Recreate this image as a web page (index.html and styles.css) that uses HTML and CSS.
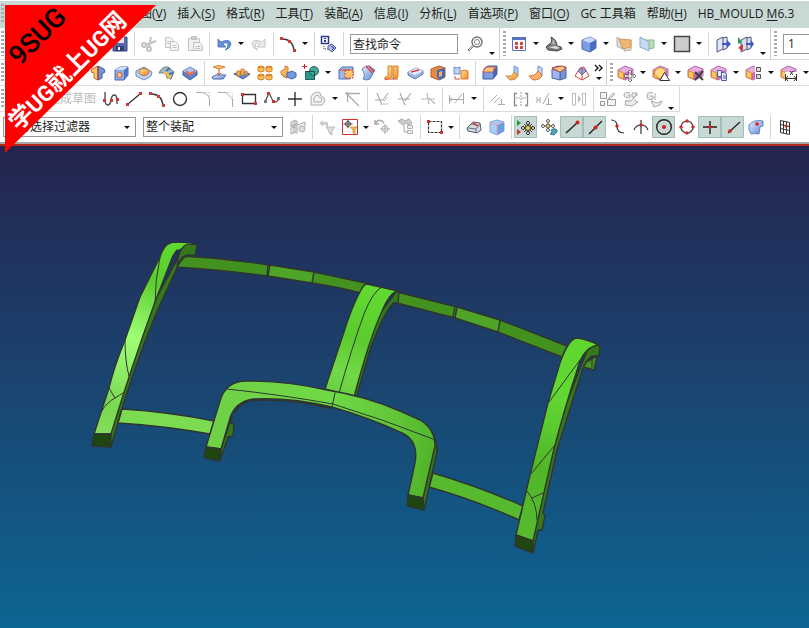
FILE: index.html
```html
<!DOCTYPE html>
<html lang="zh-CN">
<head>
<meta charset="utf-8">
<meta name="viewport" content="width=device-width">
<title>NX</title>
<link rel="stylesheet" href="styles.css">
</head>
<body>
<svg class="defs" aria-hidden="true">
<defs>
<linearGradient id="gBlue" x1="0" y1="0" x2="1" y2="1"><stop offset="0" stop-color="#e8f1ff"/><stop offset="1" stop-color="#5d86d2"/></linearGradient>
<linearGradient id="gOr" x1="0" y1="0" x2="1" y2="1"><stop offset="0" stop-color="#ffe39a"/><stop offset="1" stop-color="#ee8a2c"/></linearGradient>
<linearGradient id="pillarL" gradientUnits="userSpaceOnUse" x1="180" y1="243" x2="100" y2="434"><stop offset="0" stop-color="#60da30"/><stop offset=".22" stop-color="#5ccc2e"/><stop offset=".5" stop-color="#9dff74"/><stop offset=".68" stop-color="#8fec68"/><stop offset=".85" stop-color="#78d84e"/><stop offset="1" stop-color="#84de5c"/></linearGradient>
<linearGradient id="pillarC" gradientUnits="userSpaceOnUse" x1="380" y1="285" x2="340" y2="395"><stop offset="0" stop-color="#62dc30"/><stop offset=".5" stop-color="#5ccb2e"/><stop offset=".8" stop-color="#72d948"/><stop offset="1" stop-color="#68d03e"/></linearGradient>
<linearGradient id="pillarR" gradientUnits="userSpaceOnUse" x1="580" y1="338" x2="525" y2="540"><stop offset="0" stop-color="#5fd82e"/><stop offset=".3" stop-color="#62d733"/><stop offset=".65" stop-color="#50b628"/><stop offset="1" stop-color="#57ba2f"/></linearGradient>
<linearGradient id="arch" gradientUnits="userSpaceOnUse" x1="210" y1="400" x2="435" y2="450"><stop offset="0" stop-color="#70d047"/><stop offset=".5" stop-color="#70d945"/><stop offset=".8" stop-color="#61c638"/><stop offset="1" stop-color="#52b32b"/></linearGradient>
</defs>

<symbol id="cube" viewBox="0 0 20 20"><path d="M3 6l8-3 6 3v8l-6 4-8-3z" fill="#7d9fe4" stroke="#4866ae"/><path d="M3 6l8-3 6 3-6 3z" fill="#c4d8fa"/><path d="M11 9l6-3v8l-6 4z" fill="#4a6cc0"/></symbol>
<symbol id="pink" viewBox="0 0 20 20"><path d="M2 7l7-4 8 3v7l-8 4-7-3z" fill="#e5aede" stroke="#b565ac"/><path d="M2.500 7.500l5 2.500v6l-5-2z" fill="#ffc95e" stroke="#df8a30"/><path d="M8 10l8-3v6l-8 4z" fill="#cc68b4"/></symbol>
<symbol id="save" viewBox="0 0 20 20"><path d="M3 3h14v14H3z" fill="#5669a8" stroke="#37488a"/><path d="M6 3h8v6H6z" fill="#dce4f5"/><path d="M6 12h8v5H6z" fill="#303d70"/><path d="M8 13h2v3H8z" fill="#fff"/></symbol>
<symbol id="cut" viewBox="0 0 20 20"><g fill="none" stroke="#c3c3c3" stroke-width="2"><circle cx="5" cy="11" r="2"/><circle cx="10" cy="15" r="2"/><path d="M7 11l10-4M10 13L12 3"/></g></symbol>
<symbol id="copy" viewBox="0 0 20 20"><g fill="#f5f5f5" stroke="#c3c3c3"><path d="M3.500 3.500h5l3 3v7h-8z"/><path d="M8.500 7.500h5l3 3v6h-8zM10.500 11.500h4M10.500 13.500h4M5 7.500h3M5 9.500h3"/></g></symbol>
<symbol id="paste" viewBox="0 0 20 20"><g fill="#f2f2f2" stroke="#c0c0c0"><path d="M3.500 4.500h11v12h-11z"/><path d="M6.500 2.500h5v3h-5z" fill="#ccc"/><path d="M8.500 8.500h6l3 3v5h-9zM10.500 12.500h5M10.500 14.500h5"/></g></symbol>
<symbol id="undo" viewBox="0 0 20 20"><path d="M4 5v8h8L9 10q4-3 5 1 0 3-3 5 5-1 6-6-1-6-10-2z" fill="#6591d8" stroke="#3e6db9" stroke-width=".8"/></symbol>
<symbol id="redo" viewBox="0 0 20 20"><path d="M16 5v8H8l3-3Q7 7 6 11q0 3 3 5-5-1-6-6 1-6 10-2z" fill="#ececec" stroke="#c5c5c5"/></symbol>
<symbol id="arc" viewBox="0 0 20 20"><path d="M4 5q11 0 12 12" fill="none" stroke="#333" stroke-width="1.500"/><path d="M2 3h3v3H2zM10 6h3v3h-3zM15 15h3v3h-3z" fill="#d03a3a"/></symbol>
<symbol id="info" viewBox="0 0 20 20"><path d="M2.500 2.500h7v7h-7z" fill="#fff" stroke="#2c3587" stroke-width="1.500"/><path d="M5 4h2v1H5zM5 6h2v2H5z" fill="#2c3587"/><path d="M5 12v3h4" fill="none" stroke="#444" stroke-dasharray="1 1"/><path d="M9 12l4-2 4 4-4 4-4-3z" fill="#b4bbea" stroke="#5058a8"/><path d="M12 12l3 2-2 2" fill="none" stroke="#2c3587"/></symbol>
<symbol id="find" viewBox="0 0 20 20"><circle cx="12" cy="8" r="5" fill="#fff" stroke="#777" stroke-width="1.500"/><circle cx="12" cy="8" r="2.500" fill="none" stroke="#888"/><path d="M8 11l-5 5 1 1 5-5" fill="#eee" stroke="#777"/></symbol>
<symbol id="win" viewBox="0 0 20 20"><path d="M3.500 3.500h13v13h-13z" fill="#f6f8ff" stroke="#5c74b8"/><path d="M3 3h14v3H3z" fill="#5873c0"/><path d="M6 8h3v3H6zM11 8h3v3h-3zM6 12h3v3H6zM11 12h3v3h-3z" fill="#d5483e"/></symbol>
<symbol id="hat" viewBox="0 0 20 20"><path d="M4 11q5-2 3-8 6 3 6 9l4 1 1 2-5 2-9-1-2-3z" fill="#777" stroke="#484848"/><path d="M4 13l8-1 4 2-4 1z" fill="#ddd"/><path d="M9 5q3 3 2 6l-4-1z" fill="#aaa"/></symbol>
<symbol id="sheetO" viewBox="0 0 20 20"><path d="M3 3v9l5 3V6zM10 8l7-2v10l-7 1z" fill="#ddd" stroke="#b0b0b0"/><path d="M5 5l12 1v7l-8 2z" fill="#efb671" stroke="#d99655"/></symbol>
<symbol id="sheetB" viewBox="0 0 20 20"><path d="M8 6h9v8l-6 1z" fill="#b7ddb8" stroke="#84ba89"/><path d="M3 3v10l9 4V8z" fill="#c7dbf0" stroke="#8aa8c8"/></symbol>
<symbol id="square" viewBox="0 0 20 20"><path d="M2.500 2.500h15v15h-15z" fill="#ccc" stroke="#444" stroke-width="1.500"/></symbol>
<symbol id="exit" viewBox="0 0 20 20"><path d="M4 6l6-3v12l-6 3zM10 4l4-1v11l-4 2" fill="#e0e6f5" stroke="#4a557e"/><path d="M9 9h5V6l4 4-4 4v-3H9z" fill="#3d54c4"/></symbol>
<symbol id="exit2" viewBox="0 0 20 20"><path d="M5 6l6-3v12l-6 3zM11 4l4-1v11l-4 2" fill="#d8dff2" stroke="#4a557e"/><path d="M10 9h5V6l3 4-3 4v-3h-5z" fill="#3d54c4"/><path d="M2 3l4 5-4 2z" fill="#2b9d50"/><path d="M7 10l-5 4 5 3z" fill="#cf3d35"/></symbol>

<symbol id="m1" viewBox="0 0 20 20"><path d="M4 6l6-3v14l-4-2v-5l-3-1z" fill="#ffc560" stroke="#c26d2b"/><path d="M10 3l6 3 1 3-3 2v4l-4 2z" fill="#7593ce" stroke="#455d99"/><path d="M10 3v14" stroke="#b33f36"/></symbol>
<symbol id="m2" viewBox="0 0 20 20"><path d="M4 7l5-3h8v8l-4 5H4z" fill="#8ea9e6" stroke="#4a66b2"/><path d="M4 7l5-3h8l-4 3z" fill="#d3e0fb"/><path d="M13 7l4-3v8l-4 5z" fill="#5673c4"/><circle cx="8.500" cy="12" r="2.500" fill="#ffd890" stroke="#d55234"/></symbol>
<symbol id="m3" viewBox="0 0 20 20"><path d="M2 8l8-4 8 5-1 4-7 4-8-4z" fill="#bcd5f5" stroke="#6390ca"/><ellipse cx="10" cy="9" rx="5" ry="3.500" fill="url(#gOr)" stroke="#cc6a26"/></symbol>
<symbol id="m4" viewBox="0 0 20 20"><path d="M2 10q3-7 9-6l6 5-3 7-4-1q0-6-8-5z" fill="#a9b7bd" stroke="#667b85"/><path d="M6 11q5 0 5 5l3-1q0-6-6-6z" fill="#f2bf50"/><path d="M9 8l4-3M12 11l4-1" stroke="#3d76b5" stroke-width="2"/></symbol>
<symbol id="m5" viewBox="0 0 20 20"><path d="M3 8l7-4 7 4v4l-7 5-7-5z" fill="#5d7fcb" stroke="#3c5da8"/><path d="M3 8l7-4 7 4-7 4z" fill="#a8c2f4"/><path d="M6 7l4 3 5-3v2l-5 4-4-3z" fill="#f06d3b"/></symbol>
<symbol id="m6" viewBox="0 0 20 20"><path d="M3 14l4-2h10l-3 4H4z" fill="url(#gBlue)" stroke="#4b69af"/><path d="M4 4q6-3 12 0l-6 2z" fill="#ffc873" stroke="#d67f31"/><path d="M10 6v6M8 10l2 2 2-2" fill="none" stroke="#c94b31"/></symbol>
<symbol id="m7" viewBox="0 0 20 20"><path d="M2 11l8-3 8 3-7 5z" fill="#6489ce" stroke="#3d5ea4"/><path d="M5 8h3v5H5zM9 6h3v6H9zM13 8h2v4h-2z" fill="#f6b552" stroke="#c97928" stroke-width=".8"/></symbol>
<symbol id="m8" viewBox="0 0 20 20"><g fill="#ffbe58" stroke="#d28125"><path d="M3 4l3-1 3 1v4l-3 1-3-1zM11 4l3-1 3 1v4l-3 1-3-1zM3 12l3-1 3 1v4l-3 1-3-1zM11 12l3-1 3 1v4l-3 1-3-1z"/><path d="M3 4l3 1 3-1M11 4l3 1 3-1M3 12l3 1 3-1M11 12l3 1 3-1"/></g></symbol>
<symbol id="m9" viewBox="0 0 20 20"><path d="M3 8l4-2V3l3 1v4l-1 7-3-1-3-3z" fill="url(#gOr)" stroke="#d17a32"/><path d="M9 10l5-2 4 2v4l-4 2-5-2z" fill="#7599dc" stroke="#4668b0"/></symbol>
<symbol id="m10" viewBox="0 0 20 20"><path d="M4.500 8.500h9v8h-9z" fill="#2b9a8b" stroke="#246459"/><circle cx="13" cy="8" r="4.500" fill="#41a79a" stroke="#285f55"/><path d="M4.500 8.500h9v8" fill="none" stroke="#1d4f47"/><path d="M1 3.500h5M3.500 1v5" stroke="#d02828"/></symbol>
<symbol id="m11" viewBox="0 0 20 20"><path d="M3 7l3-3h11v9l-3 3H3z" fill="#9db9ec" stroke="#506eb4"/><path d="M9 7h8v8H9z" fill="#ffc768" stroke="#d34632" stroke-dasharray="2 1"/><path d="M3 7h11" stroke="#d34632"/></symbol>
<symbol id="m12" viewBox="0 0 20 20"><path d="M3 6q4-4 7-3l6 4-5 9q-4 2-7 0 3-4-1-10z" fill="url(#gBlue)" stroke="#6880b8"/><path d="M7 3l6 7M10 3l5 6" stroke="#d44040" stroke-width="1.200"/></symbol>
<symbol id="m13" viewBox="0 0 20 20"><path d="M6 3h4v11l-7 3v-3l3-1zM11 3h5v11l-5 2z" fill="url(#gOr)" stroke="#d5842f"/><path d="M3 16h13" stroke="#d24b2d"/></symbol>
<symbol id="m14" viewBox="0 0 20 20"><path d="M3 9l8-4 7 3v3l-8 5-7-4z" fill="#9bb4e9" stroke="#5876bb"/><path d="M3 9l8-4 7 3-8 4z" fill="#e8efff"/><path d="M6 9l8-2" stroke="#d93f36" stroke-width="1.500"/></symbol>
<symbol id="m15" viewBox="0 0 20 20"><path d="M3 6l8-3 6 2v9l-6 3-8-3z" fill="#e78a40" stroke="#b65a2a"/><path d="M9 7l8-2v9l-5 3-3-3z" fill="#4868b4"/><path d="M11 9l3-1v5l-3 1z" fill="#f6b165"/></symbol>
<symbol id="m16" viewBox="0 0 20 20"><path d="M3 4q3 2 6 0v7H3z" fill="#bed3f6" stroke="#6c8dc8"/><path d="M10 8q3-2 7 0v8h-7z" fill="url(#gOr)" stroke="#d77e31"/><path d="M4 13v3h5" fill="none" stroke="#d34635"/></symbol>
<symbol id="m17" viewBox="0 0 20 20"><path d="M3 9q1-5 5-6h9v8l-4 5H3z" fill="#7f9cdf" stroke="#3f5ca5"/><path d="M13 9l4-6v8l-4 5z" fill="#4563b4"/><path d="M3 9q1-4 4-5h9q-3 1-3 5z" fill="#ffc880" stroke="#cf4733" stroke-width=".8"/></symbol>
<symbol id="m18" viewBox="0 0 20 20"><path d="M11 3l4 2v7l-4 3z" fill="#b1caf2" stroke="#7192cc"/><path d="M3 13q7 1 8-4l4 3q-1 5-8 5z" fill="url(#gOr)" stroke="#d28738"/></symbol>
<symbol id="m19" viewBox="0 0 20 20"><path d="M12 3l4 2v8l-4 3z" fill="#c6d7ef" stroke="#7192cc"/><path d="M3 13q7 0 9-5l4 4q-1 5-9 5z" fill="#ffb669" stroke="#d56b34"/></symbol>
<symbol id="m21" viewBox="0 0 20 20"><path d="M3 5l6-2 8 1v11l-6 2V8z" fill="#7593d6" stroke="#4d65a8"/><path d="M3 6v9l8 2V9z" fill="#9db8ee" stroke="#4d65a8"/><path d="M3 5l10-2 4 2-6 4z" fill="#ffcb82" stroke="#d34632"/></symbol>
<symbol id="m22" viewBox="0 0 20 20"><path d="M3 13l5-8 4-1 5 9-7 4z" fill="#fff" stroke="#d44038"/><path d="M6 8q4-5 8 0l-4 4z" fill="#8fb1e8" stroke="#4d71ba"/><path d="M10 6v11" stroke="#d44038" fill="none"/></symbol>
<symbol id="p1" viewBox="0 0 20 20"><use href="#pink"/><path d="M14 7l2 2h-1v3h3v-1l2 2-2 2v-1h-3v3h1l-2 2-2-2h1v-3h-3v1l-2-2 2-2v1h3V9h-1z" fill="#fff" stroke="#444" stroke-width=".7"/></symbol>
<symbol id="p2" viewBox="0 0 20 20"><use href="#pink"/><path d="M3 11q2-8 9-6l3 4-6 7z" fill="#ffda80" stroke="#d08233"/><path d="M9 17.500l4.500-8 5 8z" fill="#fff" stroke="#333"/></symbol>
<symbol id="p3" viewBox="0 0 20 20"><use href="#pink"/><path d="M9 9l8 8M17 8l-8 9" stroke="#444" stroke-width="2"/></symbol>
<symbol id="p4" viewBox="0 0 20 20"><use href="#pink"/><path d="M8.500 7.500h4v6h-4zM12.500 9.500h3l2 2v6h-5z" fill="#e6eafc" stroke="#4d5db0"/><path d="M14 13h3M14 15h3" stroke="#4d5db0"/></symbol>
<symbol id="p5" viewBox="0 0 20 20"><use href="#pink"/><path d="M11 2h9v16h-9z" fill="#fff"/><path d="M12.500 4.500h4v4h-4zM12.500 11.500h4v4h-4z" fill="#ddd" stroke="#555"/></symbol>
<symbol id="p6" viewBox="0 0 20 20"><use href="#pink"/><path d="M6 9h14v10H6z" fill="#fff"/><path d="M6.500 11v7M17.500 11v7M7 15.500h10M9 13l-2 2.500L9 18M15 13l2 2.500L15 18M11 8l3 4M14 8l-3 4" fill="none" stroke="#333"/></symbol>

<symbol id="s1" viewBox="0 0 20 20"><path d="M4 3v8q0 5 3 5 2 0 3-5 1-5 3-5 3 0 3 5v4" fill="none" stroke="#444" stroke-width="1.300"/><path d="M2 10h3v3H2zM9 10h3v3H9zM15 9h3v3h-3z" fill="#d13434"/></symbol>
<symbol id="s2" viewBox="0 0 20 20"><path d="M4 15L16 5" stroke="#333" stroke-width="1.300"/><path d="M2 14h3v3H2zM15 3h3v3h-3z" fill="#d13434"/></symbol>
<symbol id="s4" viewBox="0 0 20 20"><circle cx="10" cy="10" r="6.500" fill="none" stroke="#333" stroke-width="1.400"/></symbol>
<symbol id="s5" viewBox="0 0 20 20"><path d="M3 3.500h6q7 1 7.500 7V17" fill="none" stroke="#aaa"/><path d="M11 3.500h5.500V9" fill="none" stroke="#ccc" stroke-dasharray="1 1"/></symbol>
<symbol id="s6" viewBox="0 0 20 20"><path d="M2 3.500h8l6.500 6.500v8" fill="none" stroke="#aaa"/><path d="M10 3.500h6.500V10" fill="none" stroke="#ccc" stroke-dasharray="1 1"/></symbol>
<symbol id="s7" viewBox="0 0 20 20"><path d="M3.500 5.500h13v9h-13z" fill="none" stroke="#333" stroke-width="1.300"/><path d="M2 4h3v3H2zM15 13h3v3h-3z" fill="#d13434"/></symbol>
<symbol id="s8" viewBox="0 0 20 20"><path d="M3 13l4-9 4 8q4 3 6-3" fill="none" stroke="#555" stroke-width="1.300"/><path d="M5 3h3v3H5zM10 11h3v3h-3z" fill="#d13434"/><path d="M2 11h3v3H2zM15 8h3v3h-3z" fill="#777"/></symbol>
<symbol id="s9" viewBox="0 0 20 20"><path d="M3 10h14M10 3v14" stroke="#333" stroke-width="1.400"/></symbol>
<symbol id="s10" viewBox="0 0 20 20"><path d="M3 16V8q1-4 6-5 4 0 4 4 4 1 4 5l-3 4z" fill="#f4f4f4" stroke="#aaa"/><path d="M6 13V9q1-3 4-3 1 3 4 4l-1 3z" fill="none" stroke="#aaa"/></symbol>
<symbol id="s11" viewBox="0 0 20 20"><path d="M2 4.500h15M4.500 3v10M4 5l12 12" fill="none" stroke="#aaa" stroke-width="1.300"/></symbol>
<symbol id="s12" viewBox="0 0 20 20"><path d="M3 11h8L16 4M5 4l5 12" stroke="#aaa" fill="none" stroke-width="1.200"/><path d="M12 12l4-4M11 15h6" stroke="#aaa" stroke-dasharray="2 1"/></symbol>
<symbol id="s13" viewBox="0 0 20 20"><path d="M3 10h12M5 4l5 12M10 12l6-8" stroke="#aaa" fill="none" stroke-width="1.200"/></symbol>
<symbol id="s14" viewBox="0 0 20 20"><path d="M3 10h14M9 4l2 11M11 9l6 6" stroke="#bbb" fill="none" stroke-width="1.200"/></symbol>
<symbol id="s15" viewBox="0 0 20 20"><path d="M2.500 6v9M16.500 4v11M3 10.500h13M5 8l-2 2.500L5 13M8 14l7-9" stroke="#aaa" fill="none"/></symbol>
<symbol id="s16" viewBox="0 0 20 20"><path d="M3 12l6-6M6 14l6-6M10 15.500h7M13.500 10v5" stroke="#aaa" fill="none"/></symbol>
<symbol id="s17" viewBox="0 0 20 20"><path d="M6 4.500H3.500v12H6M14 4.500h2.500v12H14" fill="none" stroke="#888" stroke-width="1.300"/><path d="M10 3v14M5 9h4M11 9h4" stroke="#999" stroke-dasharray="2 1"/></symbol>
<symbol id="s18" viewBox="0 0 20 20"><path d="M3 8v6M6 8v6M3 11h3M9 15l6-11M12 15.500h6M14.500 9v6" stroke="#aaa" fill="none"/></symbol>
<symbol id="s19" viewBox="0 0 20 20"><path d="M3.500 4v12M6.500 4v12M13.500 4v12M16.500 4v12M3 4.500h4M3 16h4M13 4.500h4M13 16h4" stroke="#bbb"/><path d="M9 6l3 4-3 4z" fill="#bbb"/></symbol>
<symbol id="s20" viewBox="0 0 20 20"><path d="M2.500 3.500h6v6h-6zM9.500 10.500h8v6h-8zM2.500 12.500h4v4h-4z" fill="#f3f3f3" stroke="#999"/><path d="M10 10l5-6 2 1-5 5z" fill="#eee" stroke="#aaa"/></symbol>
<symbol id="s21" viewBox="0 0 20 20"><path d="M9 4Q3 2 3 6t6 2V6H7M11 4h5l-2 4h-3zM4 12h6l7-7M5 11l-1 5 7 1 6-4-4-2" fill="#ececec" stroke="#aaa"/></symbol>
<symbol id="s22" viewBox="0 0 20 20"><path d="M9 4Q3 2 3 7t6 3V7H6M11 4v7M7 12l6 2 5-2-2 4-6 2z" fill="#ececec" stroke="#aaa"/></symbol>

<symbol id="f1" viewBox="0 0 20 20"><path d="M3 5l5-2v5l-5 2zM3 11l5-1v5l-5 2zM9 4v13M9 8l8-3v4l-6 3M3 8h6M6 4v12" fill="#eee" stroke="#aaa"/><circle cx="14" cy="12" r="3" fill="#ddd" stroke="#b2b2b2"/></symbol>
<symbol id="f2" viewBox="0 0 20 20"><path d="M2 6l4-3v2h5v5H9V8H6v2z" fill="#ccc"/><path d="M9 10h9l-3 4v4l-3-2v-2z" fill="#ddd" stroke="#bbb"/></symbol>
<symbol id="f3" viewBox="0 0 20 20"><path d="M2.500 2.500h15v15h-15z" fill="#fff" stroke="#cf3131"/><circle cx="8" cy="7" r="2.500" fill="none" stroke="#444"/><path d="M3.500 7h9M8 3v8" stroke="#444"/><path d="M10 10h7l-2 3v4l-2-1v-3z" fill="#f4b63b" stroke="#ce8629" stroke-width=".6"/></symbol>
<symbol id="f4" viewBox="0 0 20 20"><path d="M2 7q4-7 9-1M2 3v4h4" fill="none" stroke="#aaa" stroke-width="1.500"/><circle cx="12" cy="12" r="3" fill="none" stroke="#aaa"/><path d="M7 12h10M12 7v10" stroke="#aaa"/></symbol>
<symbol id="f5" viewBox="0 0 20 20"><path d="M2 4l4-2 3 2 4-2 3 4-3 2-3-2-3 2z" fill="#ccc" stroke="#aaa"/><path d="M11.500 8.500h5v3h-5zM11.500 13.500h5v3h-5zM8 8v7h3" fill="#eee" stroke="#b4b4b4"/></symbol>
<symbol id="f6" viewBox="0 0 20 20"><path d="M3.500 4.500h13v11h-13z" fill="none" stroke="#333" stroke-width="1.200" stroke-dasharray="3 1"/><path d="M2 3h3v3H2zM15 14h3v3h-3z" fill="#d13434"/></symbol>
<symbol id="f7" viewBox="0 0 20 20"><path d="M3 11l6-6 7 1 1 7-4 3-9-2z" fill="#d5dbe5" stroke="#505a69"/><path d="M4 11l8 1 4-5M12 12v4M7 7l6 1" fill="none" stroke="#69717f"/><path d="M9 6l5 3" stroke="#dc3838" stroke-width="1.500"/></symbol>
<symbol id="f8" viewBox="0 0 20 20"><path d="M3 5l7-2 7 2v9l-7 4-7-3z" fill="#a9cdf3" stroke="#7daade"/><path d="M10 8l7-3v9l-7 4z" fill="#6e9bdd"/><path d="M3 5l7 3 7-3M10 8v9" fill="none" stroke="#e6a0b0"/></symbol>
<symbol id="f9" viewBox="0 0 20 20"><path d="M1 3l4 3-4 3z" fill="#209a37"/><path d="M1 12l4 3-4 3z" fill="#c93030"/><path d="M6 11h12M12 5v12M8 7l8 8M16 7l-8 8" stroke="#333"/><g fill="#fff" stroke="#222"><circle cx="12" cy="6" r="1.500"/><circle cx="12" cy="16" r="1.500"/><circle cx="7" cy="11" r="1.500"/><circle cx="17" cy="11" r="1.500"/></g><circle cx="12" cy="11" r="2.500" fill="#f3da2a" stroke="#333"/></symbol>
<symbol id="f10" viewBox="0 0 20 20"><g fill="#fff" stroke="#555"><path d="M4 9h11M9 3v11"/><circle cx="9" cy="4" r="1.500"/><circle cx="9" cy="13" r="1.500"/><circle cx="4" cy="9" r="1.500"/><circle cx="14" cy="9" r="1.500"/></g><circle cx="9" cy="9" r="2" fill="#f0d43b" stroke="#555"/><path d="M12 13q3-3 6 0v2l-3 3-4-1 2-2z" fill="#4fa7b3" stroke="#347f8a"/></symbol>
<symbol id="f11" viewBox="0 0 20 20"><path d="M4 16L15 6" stroke="#222" stroke-width="1.400"/><circle cx="15.500" cy="5.500" r="2" fill="#d21f1f"/></symbol>
<symbol id="f12" viewBox="0 0 20 20"><path d="M4 17L17 4" stroke="#222" stroke-width="1.400"/><circle cx="10.500" cy="10.500" r="2" fill="#d21f1f"/></symbol>
<symbol id="f13" viewBox="0 0 20 20"><path d="M3 3q6 0 6 6 0 7 7 7" fill="none" stroke="#333" stroke-width="1.200"/><circle cx="9" cy="9" r="1.700" fill="#d21f1f"/></symbol>
<symbol id="f14" viewBox="0 0 20 20"><path d="M3 13q2-5 7-5t7 5M10 3v14" fill="none" stroke="#333" stroke-width="1.200"/><circle cx="10" cy="8" r="1.700" fill="#d21f1f"/></symbol>
<symbol id="f15" viewBox="0 0 20 20"><circle cx="10" cy="10" r="7.300" fill="none" stroke="#222" stroke-width="1.400"/><circle cx="10" cy="10" r="2" fill="#d21f1f"/></symbol>
<symbol id="f16" viewBox="0 0 20 20"><circle cx="10" cy="10" r="6" fill="none" stroke="#444" stroke-width="1.200"/><g fill="#d62b2b"><circle cx="10" cy="4" r="1.800"/><circle cx="10" cy="16" r="1.800"/><circle cx="4" cy="10" r="1.800"/><circle cx="16" cy="10" r="1.800"/></g></symbol>
<symbol id="f17" viewBox="0 0 20 20"><path d="M3 10h14M10 4v13" stroke="#222" stroke-width="1.400"/><circle cx="10" cy="10" r="1.800" fill="#d21f1f"/></symbol>
<symbol id="f18" viewBox="0 0 20 20"><path d="M5 16L17 5" stroke="#222" stroke-width="1.300"/><circle cx="7" cy="14" r="1.800" fill="#d21f1f"/></symbol>
<symbol id="f19" viewBox="0 0 20 20"><path d="M3 8q5-6 14-4v5l-3 1-1 7q-3-1-8 0-3-4-2-9z" fill="url(#gBlue)" stroke="#6387bd"/><circle cx="11" cy="7" r="1.800" fill="#d21f1f"/></symbol>
<symbol id="f20" viewBox="0 0 20 20"><path d="M5.500 3.500l9 2v12l-9-2zM8.500 4v12M11.500 5v12M5.500 7.500l9 2M5.500 11.500l9 2" fill="none" stroke="#333"/><circle cx="11" cy="9" r="1.500" fill="#d21f1f"/></symbol>
</svg>

<nav class="menu" aria-label="菜单">
<i class="grip"></i>
<a href="#">视图(<u>V</u>)</a><a href="#">插入(<u>S</u>)</a><a href="#">格式(<u>R</u>)</a><a href="#">工具(<u>T</u>)</a><a href="#">装配(<u>A</u>)</a><a href="#">信息(<u>I</u>)</a><a href="#">分析(<u>L</u>)</a><a href="#">首选项(<u>P</u>)</a><a href="#">窗口(<u>O</u>)</a><a href="#">GC 工具箱</a><a href="#">帮助(<u>H</u>)</a><a href="#">HB_MOULD <u>M</u>6.3</a>
</nav>

<div class="bar standard">
<i class="grip"></i>
<button class="b first" aria-label="保存"><svg><use href="#save"/></svg></button><i class="sep"></i>
<button class="b" aria-label="剪切"><svg><use href="#cut"/></svg></button>
<button class="b" aria-label="复制"><svg><use href="#copy"/></svg></button>
<button class="b" aria-label="粘贴"><svg><use href="#paste"/></svg></button><i class="sep"></i>
<button class="b" aria-label="撤消"><svg><use href="#undo"/></svg></button><button class="d" aria-label="撤消列表"></button>
<button class="b" aria-label="重做"><svg><use href="#redo"/></svg></button><i class="sep"></i>
<button class="b" aria-label="圆弧"><svg><use href="#arc"/></svg></button><button class="d" aria-label="曲线列表"></button><i class="sep"></i>
<button class="b" aria-label="信息"><svg><use href="#info"/></svg></button><i class="sep"></i>
<input class="search" type="text" value="查找命令" aria-label="查找命令">
<button class="b" aria-label="查找"><svg><use href="#find"/></svg></button><button class="d low" aria-label="工具条选项"></button>
<i class="edge"></i><i class="grip"></i>
<button class="b" aria-label="窗口"><svg><use href="#win"/></svg></button><button class="d" aria-label="窗口列表"></button>
<button class="b" aria-label="渲染"><svg><use href="#hat"/></svg></button><button class="d" aria-label="渲染列表"></button>
<button class="b" aria-label="方位"><svg><use href="#cube"/></svg></button><button class="d" aria-label="方位列表"></button>
<button class="b" aria-label="截面"><svg><use href="#sheetO"/></svg></button>
<button class="b" aria-label="编辑截面"><svg><use href="#sheetB"/></svg></button><button class="d" aria-label="截面列表"></button>
<button class="b" aria-label="背景"><svg><use href="#square"/></svg></button><button class="d" aria-label="背景列表"></button><i class="sep"></i>
<button class="b" aria-label="移出"><svg><use href="#exit"/></svg></button>
<button class="b" aria-label="切换"><svg><use href="#exit2"/></svg></button><button class="d low" aria-label="视图选项"></button>
<i class="edge"></i><i class="grip"></i>
<input class="layer" type="text" value="1" aria-label="工作图层">
</div>

<div class="bar feature">
<i class="grip"></i>
<button class="b first" aria-label="拆分体"><svg><use href="#m1"/></svg></button>
<button class="b" aria-label="孔"><svg><use href="#m2"/></svg></button>
<button class="b" aria-label="凸起"><svg><use href="#m3"/></svg></button>
<button class="b" aria-label="抽壳"><svg><use href="#m4"/></svg></button>
<button class="b" aria-label="槽"><svg><use href="#m5"/></svg></button><i class="sep"></i>
<button class="b" aria-label="拉伸"><svg><use href="#m6"/></svg></button>
<button class="b" aria-label="凸台"><svg><use href="#m7"/></svg></button>
<button class="b" aria-label="阵列"><svg><use href="#m8"/></svg></button>
<button class="b" aria-label="镜像"><svg><use href="#m9"/></svg></button>
<button class="b" aria-label="求和"><svg><use href="#m10"/></svg></button><button class="d" aria-label="布尔列表"></button>
<button class="b" aria-label="修剪体"><svg><use href="#m11"/></svg></button>
<button class="b" aria-label="修剪片体"><svg><use href="#m12"/></svg></button>
<button class="b" aria-label="延伸"><svg><use href="#m13"/></svg></button>
<button class="b" aria-label="分割面"><svg><use href="#m14"/></svg></button>
<button class="b" aria-label="补片"><svg><use href="#m15"/></svg></button>
<button class="b" aria-label="缝合"><svg><use href="#m16"/></svg></button><i class="sep"></i>
<button class="b" aria-label="边倒圆"><svg><use href="#m17"/></svg></button>
<button class="b" aria-label="面倒圆"><svg><use href="#m18"/></svg></button>
<button class="b" aria-label="软倒圆"><svg><use href="#m19"/></svg></button>
<button class="b" aria-label="倒斜角"><svg><use href="#m21"/></svg></button>
<button class="b" aria-label="拔模"><svg><use href="#m22"/></svg></button>
<button class="d more" aria-label="更多"><svg viewBox="0 0 12 8"><path d="M2 1l3 3-3 3M6 1l3 3-3 3"/></svg></button>
<i class="edge"></i><i class="grip"></i>
<button class="b" aria-label="移动面"><svg><use href="#p1"/></svg></button><button class="d" aria-label="移动面列表"></button>
<button class="b" aria-label="调整面"><svg><use href="#p2"/></svg></button><button class="d" aria-label="调整面列表"></button>
<button class="b" aria-label="删除面"><svg><use href="#p3"/></svg></button>
<button class="b" aria-label="复制面"><svg><use href="#p4"/></svg></button><button class="d" aria-label="复制面列表"></button>
<button class="b" aria-label="关联"><svg><use href="#p5"/></svg></button><button class="d" aria-label="关联列表"></button>
<button class="b" aria-label="尺寸"><svg><use href="#p6"/></svg></button><button class="d" aria-label="尺寸列表"></button>
</div>

<div class="bar sketch">
<i class="grip"></i>
<button class="finish" disabled>完成草图</button>
<button class="b" aria-label="轮廓"><svg><use href="#s1"/></svg></button>
<button class="b" aria-label="直线"><svg><use href="#s2"/></svg></button>
<button class="b" aria-label="圆弧"><svg><use href="#arc"/></svg></button>
<button class="b" aria-label="圆"><svg><use href="#s4"/></svg></button>
<button class="b" aria-label="圆角"><svg><use href="#s5"/></svg></button>
<button class="b" aria-label="倒角"><svg><use href="#s6"/></svg></button>
<button class="b" aria-label="矩形"><svg><use href="#s7"/></svg></button>
<button class="b" aria-label="样条"><svg><use href="#s8"/></svg></button>
<button class="b" aria-label="点"><svg><use href="#s9"/></svg></button>
<button class="b" aria-label="偏置"><svg><use href="#s10"/></svg></button><button class="d" aria-label="偏置列表"></button>
<button class="b" aria-label="派生"><svg><use href="#s11"/></svg></button><i class="sep"></i>
<button class="b" aria-label="快速修剪"><svg><use href="#s12"/></svg></button>
<button class="b" aria-label="快速延伸"><svg><use href="#s13"/></svg></button>
<button class="b" aria-label="制作拐角"><svg><use href="#s14"/></svg></button><i class="sep"></i>
<button class="b" aria-label="尺寸"><svg><use href="#s15"/></svg></button><button class="d" aria-label="尺寸列表"></button><i class="sep"></i>
<button class="b" aria-label="约束"><svg><use href="#s16"/></svg></button>
<button class="b" aria-label="对称"><svg><use href="#s17"/></svg></button>
<button class="b" aria-label="显示约束"><svg><use href="#s18"/></svg></button><button class="d" aria-label="约束列表"></button>
<button class="b" aria-label="转换"><svg><use href="#s19"/></svg></button><i class="sep"></i>
<button class="b" aria-label="备选解"><svg><use href="#s20"/></svg></button>
<button class="b" aria-label="重新附着"><svg><use href="#s21"/></svg></button>
<button class="b" aria-label="更新模型"><svg><use href="#s22"/></svg></button><button class="d low" aria-label="草图选项"></button>
</div>

<div class="bar selection">
<span class="pick type"><select aria-label="类型过滤器"><option>没有选择过滤器</option></select></span>
<span class="pick scope"><select aria-label="选择范围"><option>整个装配</option></select></span>
<button class="b" aria-label="范围"><svg><use href="#f1"/></svg></button><i class="sep"></i>
<button class="b" aria-label="重置过滤器"><svg><use href="#f2"/></svg></button>
<button class="b" aria-label="常规过滤器"><svg><use href="#f3"/></svg></button><button class="d" aria-label="过滤器列表"></button>
<button class="b" aria-label="恢复"><svg><use href="#f4"/></svg></button>
<button class="b" aria-label="全不选"><svg><use href="#f5"/></svg></button><i class="sep"></i>
<button class="b" aria-label="矩形选择"><svg><use href="#f6"/></svg></button><button class="d" aria-label="选择方式"></button><i class="sep"></i>
<button class="b" aria-label="隐藏边"><svg><use href="#f7"/></svg></button>
<button class="b" aria-label="着色"><svg><use href="#f8"/></svg></button><i class="sep"></i>
<button class="b on" aria-label="启用捕捉"><svg><use href="#f9"/></svg></button>
<button class="b" aria-label="清除捕捉"><svg><use href="#f10"/></svg></button>
<button class="b on" aria-label="端点"><svg><use href="#f11"/></svg></button>
<button class="b on" aria-label="中点"><svg><use href="#f12"/></svg></button>
<button class="b" aria-label="控制点"><svg><use href="#f13"/></svg></button>
<button class="b" aria-label="交点"><svg><use href="#f14"/></svg></button>
<button class="b on" aria-label="圆心"><svg><use href="#f15"/></svg></button>
<button class="b" aria-label="象限点"><svg><use href="#f16"/></svg></button>
<button class="b on" aria-label="现有点"><svg><use href="#f17"/></svg></button>
<button class="b on" aria-label="曲线上的点"><svg><use href="#f18"/></svg></button>
<button class="b" aria-label="面上的点"><svg><use href="#f19"/></svg></button><i class="sep"></i>
<button class="b" aria-label="栅格点"><svg><use href="#f20"/></svg></button>
</div>

<main class="view">
<svg class="model" viewBox="0 146 809 482" preserveAspectRatio="xMidYMid slice" role="img" aria-label="模型">
<g stroke="#2f3530" stroke-width="1.400" stroke-linejoin="round" stroke-linecap="round">
<path fill="#439220" d="M182 256Q225 258 268 265L314 272 370 284 361 293Q338 287 312 283L267 276Q225 270 176 267z"/>
<path fill="#4fa528" d="M270 265L314 272 312 283 268 276z"/><path d="M268 265l-1 11"/>
<path fill="#439220" d="M397 292L457 307 500 320 567 346 562 357 498 332 455 318 397 303z"/>
<path fill="#4fa528" d="M457 307L500 320 498 332 455 318z"/><path d="M455 307l-2 10"/>
<path fill="#7bdc52" d="M122 409Q170 412 214 421L210 434Q165 426 118 423z"/>
<path fill="#56b92e" d="M433 473Q480 487 523 506L519 520Q475 500 429 487z"/>

<path fill="#36781c" d="M186 243L197 245 195 255 189 255Q180 258 175 272L158 309Q130 375 111 447L110 434 150 310z"/>
<path fill="url(#pillarL)" d="M171 243L187 243Q177 247 172 258L155 302Q132 365 111 434L94 434 109 388Q114 367 125 340L140 297 160 257Q164 244 171 243z"/>
<path fill="#20460f" d="M94 434H111L110.500 447 92 446z"/>
<path fill="none" stroke-width="1" d="M160 257Q155 280 155 304M125 340Q125 362 129 376M109 388L115 398Q120 395 123 393M115 398Q107 402 101 412"/>
<path stroke="none" fill="#5fd82f" d="M171 243L187 243 197 245 187 245 178 250z"/>
<path stroke-width="1.200" fill="#36781c" d="M197 245L195 255 189 255Q182 254 177 266 178 249 187 244z"/>

<path fill="#36781c" d="M397 291L399 292 398 303 393 303Q382 316 370 350L356 398 352 396 375 320z"/>
<path fill="url(#pillarC)" d="M367 284L398 291Q390 292 382 311 369 340 354 397L325 389 343 335Q352 306 361 290 364 284 367 284z"/>
<path fill="none" stroke-width="1" d="M382 287Q373 291 364 314 352 347 339 393"/>

<path fill="#36781c" d="M221 449L232 416 231 423 234 424 233 436 228 437 220 461z"/>
<path fill="#36781c" d="M423 425Q437 432 437 452L424 510 422 497z"/>
<path fill="url(#arch)" d="M206 447L220 401Q226 381 246 381 288 381 327 390 365 396 400 411L420 420Q435 429 435 446L423 498 408 495 415 463Q419 441 402 433 370 418 332 407 290 397 253 399 235 402 230 418L221 449z"/>
<path fill="#20460f" d="M206 447L221 449 220 461 204 458z"/><path fill="#20460f" d="M408 495L423 498 424 510 407 506z"/>
<path fill="none" stroke-width="1" d="M227 389Q283 395 333 404 385 420 433 439M335 393L332 407"/>
<path fill="none" stroke-width="2" d="M234 413Q241 401 253 400 291 398 330 408"/>

<path fill="#439220" d="M583 364L597 356 594 370 583 367z"/>
<path fill="#36781c" d="M590 343L600 346 599 356 595 356Q586 356 580 377L557 450 543 513 545 516 542 530 538 530 533 553 532 541 556 430z"/>
<path fill="url(#pillarR)" d="M577 338Q586 339 599 345 587 346 580 361 563 413 553 453L533 541 516 535 530 475 548 403 560 363Q569 338 577 338z"/>
<path fill="#20460f" d="M516 535L533 541V553L515 546z"/>
<path fill="none" stroke-width="1" d="M580 360L549 402M555 445L530 475M527 491Q537 503 537 520M532 498L543 493M592 356V367"/>
</g>
</svg>
</main>

<svg class="banner" viewBox="0 0 155 155" role="img" aria-label="9SUG 学UG就上UG网">
<path fill="#f00" d="M5 5H156L5 153z"/>
<g transform="rotate(-45)"><text class="site" x="-33" y="61">9SUG</text><text class="slogan" x="-80" y="106">学<tspan>UG</tspan>就上<tspan>UG</tspan>网</text></g>
</svg>
</body>
</html>
```
FILE: styles.css
```css
* { box-sizing: border-box; }
body {
  margin: 0;
  min-height: 100vh;
  display: flex;
  flex-direction: column;
  position: relative;
  overflow-x: hidden;
  background: #fff;
  color: #1c1c1c;
  font: 12px/16px "Open Sans", "Noto Sans CJK SC", sans-serif;
}
button, input, select { font: inherit; color: inherit; }
.defs { position: absolute; width: 0; height: 0; }

.menu {
  display: flex;
  align-items: center;
  gap: 11px;
  height: 28px;
  padding-bottom: 2px;
  border-top: 1px solid #fff;
  background: #c8d8d5;
  white-space: nowrap;
  overflow: hidden;
}
.menu a { color: inherit; text-decoration: none; }
.menu .grip { margin-right: 113px; }
.menu u { text-underline-offset: 2px; }

.bar {
  display: flex;
  align-items: center;
  border-bottom: 1px solid #dcdcdc;
  background: #fff;
  overflow: hidden;
}
.bar > * { flex: none; }
.standard { height: 32px; }
.feature, .sketch { height: 26px; }
.sketch { align-self: flex-start; padding-right: 2px; border-right: 1px solid #dcdcdc; }
.selection { height: 32px; border-bottom: 2px solid #a5a5a5; }

.grip {
  width: 3px;
  align-self: stretch;
  margin: 3px 1px;
  background: repeating-linear-gradient(#aaa 0 2px, transparent 2px 4px);
}
.b {
  display: grid;
  place-items: center;
  width: 23px;
  height: 22px;
  padding: 0;
  border: 0;
  background: none;
}
.b svg { width: 20px; height: 20px; }
.b.on { border: 1px solid #a2bfb9; background: #c8d8d5; }
.standard .first { margin-left: 103px; }
.feature .first { margin-left: 81px; }
.d {
  display: grid;
  place-items: center;
  width: 12px;
  height: 22px;
  padding: 0;
  border: 0;
  background: none;
}
.selection .d { width: 10px; }
.d::after { content: ""; border: 3px solid transparent; border-top-color: #111; border-bottom: 0; }
.d.low { align-items: end; }
.d.more { align-content: space-between; padding: 2px 0 4px; }
.more svg { width: 12px; height: 8px; fill: none; stroke: #111; stroke-width: 1.4; }
.sep { width: 6px; height: 24px; background: linear-gradient(#d5d5d5, #d5d5d5) center / 1px 100% no-repeat; }
.edge { width: 1px; align-self: stretch; margin: 0 2px 0 1px; background: #ccc; }

.search, .layer {
  height: 20px;
  border: 1px solid #999;
  border-radius: 0;
  padding: 0 2px;
  background: #fff;
}
.search { width: 108px; margin: 0 5px 0 4px; }
.layer { width: 48px; margin-left: 5px; padding-left: 4px; }
.finish { width: 94px; padding: 0; border: 0; background: none; color: #bbb; text-align: right; padding-right: 3px; }

.pick { display: grid; position: relative; height: 20px; }
.pick select {
  appearance: none;
  border: 1px solid #999;
  border-radius: 0;
  padding: 0 16px 0 2px;
  background: #fff;
}
.pick::after {
  content: "";
  position: absolute;
  right: 6px;
  top: 9px;
  border: 3px solid transparent;
  border-top-color: #111;
  border-bottom: 0;
}
.type { width: 133px; margin-left: 3px; }
.scope { width: 140px; margin: 0 3px 0 7px; }

.view {
  flex: 1;
  display: grid;
  min-height: 0;
  border-top: 2px solid #b12a1c;
  background: linear-gradient(#24244f, #1a4570 50%, #0d6593);
}
.model { width: 100%; height: 100%; min-height: 0; }

.banner { position: absolute; left: 0; top: 0; width: 155px; height: 155px; overflow: visible; }
.site { font: 500 27px Roboto, sans-serif; fill: #000; }
.slogan { font: 700 24px "Noto Sans CJK SC", sans-serif; fill: #fff; }
.slogan tspan { font: 700 22px Roboto, sans-serif; }
```
